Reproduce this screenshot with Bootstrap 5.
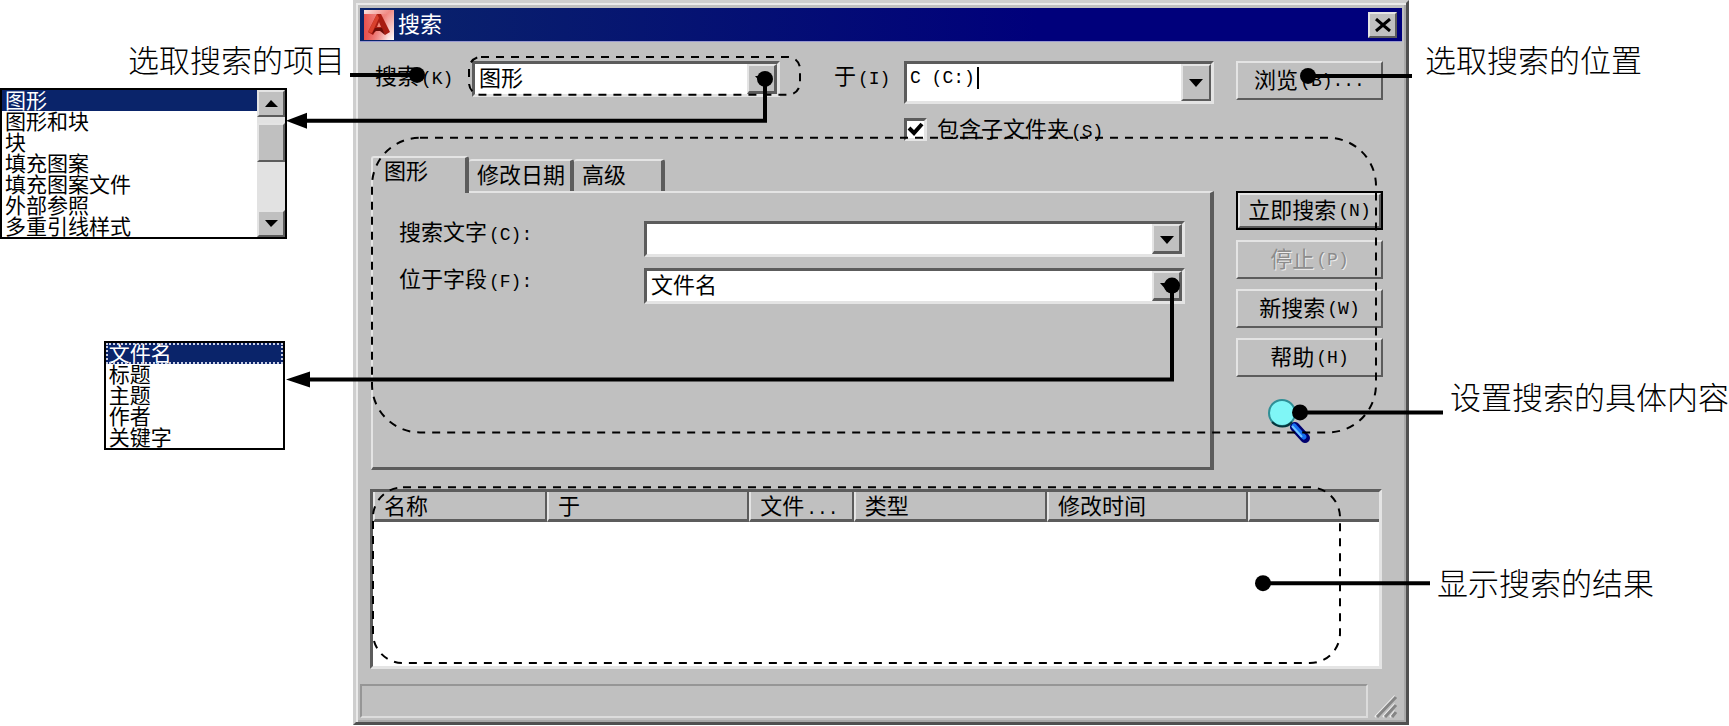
<!DOCTYPE html>
<html lang="zh-CN">
<head>
<meta charset="utf-8">
<meta name="viewport" content="width=device-width, initial-scale=1">
<title>搜索</title>
<link href="https://cdn.jsdelivr.net/npm/bootstrap@5.3.0/dist/css/bootstrap.min.css" rel="stylesheet">
<style>
:root { --face: #c0c0c0; --lite: #e4e4e4; --dark: #5c5c5c; --navy: #0a246a; }
body { font-family: "Liberation Sans", "Noto Sans CJK SC", sans-serif; font-size: 22px; line-height: 24px; color: #000; background: #fff; }
.stage { display: grid; grid-template-columns: 353fr 1056fr 320fr; }
.stage > * { min-width: 0; }
.latin { font-family: "Liberation Mono", monospace; font-size: 18px; line-height: 16px; }
span.latin { margin-left: 2px; }
.callout { font-size: 31px; line-height: 32px; font-weight: 300; white-space: nowrap; margin: 0; }
.overlay { width: 100%; height: 100%; pointer-events: none; }
.overlay * { vector-effect: non-scaling-stroke; }

/* drop-down lists beside the window */
.popup { border: 2px solid #000; font-size: 21px; line-height: 21px; }
.popup .list-group { --bs-list-group-border-width: 0; --bs-list-group-border-radius: 0; --bs-list-group-item-padding-x: 3px; --bs-list-group-item-padding-y: 0; --bs-list-group-color: #000; --bs-list-group-active-bg: var(--navy); }
.popup-a { width: 81.4%; margin-top: 10px; }
.popup-b { width: 51.4%; margin: 102px 0 0 29.4%; }
.popup-b .active { outline: 2px dotted #c9cfe6; outline-offset: -2px; }
.scroller { width: 28px; background: #e2e2e2; }
.scroller button, .scroller .thumb { height: 27px; }
.scroller .thumb { height: 39px; margin-top: 6px; }

/* window */
.dialog { background: var(--face); border: 3px solid; border-color: #cecece #505050 #505050 #cecece; box-shadow: inset 2px 2px #eaeaea, inset -2px -2px #a9a9a9; padding: 5px 4px 4px; }
.titlebar { height: 34px; background: linear-gradient(90deg, #0a246a, #00007b 65%); color: #fff; padding: 0 5px 0 4px; border-bottom: 1px solid #9a9ad0; }
.raised { background: var(--face); border: 2px solid; border-color: var(--lite) var(--dark) var(--dark) var(--lite); border-radius: 0; padding: 0; color: #000; display: flex; align-items: center; justify-content: center; }
.btn-close-x { width: 29px; height: 26px; }
.content { display: grid; grid-template-columns: 843fr 147fr; column-gap: 22px; padding: 19px 19px 0 11px; }
.content > * { min-width: 0; }
.toprow { display: grid; grid-template-columns: 101fr 308fr 54fr 70fr 310fr; }
.toprow > * { min-width: 0; white-space: nowrap; }
.sunken { border: 3px solid; border-color: var(--dark) var(--lite) var(--lite) var(--dark); background-color: #fff; }
.pick.form-select { border: 3px solid; border-color: var(--dark) var(--lite) var(--lite) var(--dark); border-radius: 0; height: 36px; padding: 0 32px 0 4px; font-size: 22px; line-height: 24px; color: #000;
  background: #fff url("data:image/svg+xml,%3Csvg xmlns='http://www.w3.org/2000/svg' width='30' height='30'%3E%3Cpath fill='%23c0c0c0' d='M0 0h30v30H0z'/%3E%3Cpath fill='%23e4e4e4' d='M0 0h30v2H2v28H0z'/%3E%3Cpath fill='%235c5c5c' d='M30 0v30H0l2-3h25V2z'/%3E%3Cpath d='M8 12h14l-7 8z'/%3E%3C/svg%3E") right center / 30px 30px no-repeat; }
.combo { height: 43px; }
.combo input { border: 0; padding: 0 0 0 3px; line-height: 24px; height: 28px; outline: 0; min-width: 0; }
.caret { left: 70px; top: 3px; width: 2px; height: 22px; background: #000; }
.tick { appearance: none; width: 23px; height: 23px; margin: 0; flex: none; border: 3px solid; border-color: var(--dark) var(--lite) var(--lite) var(--dark);
  background: #fff; }
.tick:checked { background: #fff url("data:image/svg+xml,%3Csvg xmlns='http://www.w3.org/2000/svg' viewBox='0 0 17 17'%3E%3Cpath fill='none' stroke='%23000' stroke-width='4' d='M2 7l5 5 8-9'/%3E%3C/svg%3E") center / 17px 17px no-repeat; }
.tabs { display: grid; grid-template-columns: 98fr 105fr 91fr 549fr; margin-top: 15px; align-items: end; }
.tabs button { height: 32px; background: var(--face); border: 0 solid; border-top: 2px solid var(--lite); border-right: 4px solid var(--dark); border-radius: 3px 3px 0 0; padding: 0 0 0 8px; text-align: left; color: #000; white-space: nowrap; }
.tabs button.active { height: 37px; margin-bottom: -2px; position: relative; border-left: 2px solid var(--lite); padding: 0 0 8px 11px; }
.pane { border: 2px solid var(--lite); border-right: 4px solid var(--dark); border-bottom: 3px solid var(--dark); padding: 28px 25px 163px 26px; }
.fields { display: grid; grid-template-columns: 245fr 541fr; row-gap: 11px; }
.side button { height: 39px; white-space: nowrap; width: 100%; }
.side .group { margin-top: 91px; display: grid; gap: 10px; }
.side .main-btn { outline: 2px solid #000; outline-offset: -2px; border-width: 4px; }
.side button:disabled { color: #8c8c8c; text-shadow: 1px 1px #eee; }
.lens { margin: 21px 0 0 31px; }
.results { margin: 19px 20px 0 10px; height: 180px; }
.results .table { table-layout: fixed; margin: 0; border-collapse: separate; border-spacing: 0; }
.results th { background: var(--face); height: 30px; padding: 0 0 0 9px; font-weight: 400; line-height: 24px; border: 0 solid; border-left: 2px solid var(--lite); border-right: 2px solid var(--dark); border-bottom: 3px solid var(--dark); box-shadow: none; white-space: nowrap; color: #000; overflow: hidden; }
.results th:last-child { border-right: 0; }
.statusbar { height: 34px; border: 2px solid; border-color: #969696 #dcdcdc #dcdcdc #969696; }
</style>
</head>
<body>
<main class="stage position-relative overflow-hidden">
  <aside>
    <p class="callout text-end pe-2" style="padding-top:46px">选取搜索的项目</p>
    <div class="popup popup-a d-flex">
      <ul class="list-group flex-grow-1" role="listbox" aria-label="搜索项目">
        <li class="list-group-item active" role="option">图形</li>
        <li class="list-group-item" role="option">图形和块</li>
        <li class="list-group-item" role="option">块</li>
        <li class="list-group-item" role="option">填充图案</li>
        <li class="list-group-item" role="option">填充图案文件</li>
        <li class="list-group-item" role="option">外部参照</li>
        <li class="list-group-item" role="option">多重引线样式</li>
      </ul>
      <div class="scroller d-flex flex-column">
        <button type="button" class="raised" aria-label="向上"><svg width="13" height="7"><path d="M0 7L6 0l7 7z"/></svg></button>
        <div class="raised thumb"></div>
        <button type="button" class="raised mt-auto" aria-label="向下"><svg width="13" height="7"><path d="M0 0h13L6 7z"/></svg></button>
      </div>
    </div>
    <div class="popup popup-b">
      <ul class="list-group" role="listbox" aria-label="字段">
        <li class="list-group-item active" role="option">文件名</li>
        <li class="list-group-item" role="option">标题</li>
        <li class="list-group-item" role="option">主题</li>
        <li class="list-group-item" role="option">作者</li>
        <li class="list-group-item" role="option">关键字</li>
      </ul>
    </div>
  </aside>

  <section class="dialog">
    <header class="titlebar d-flex align-items-center">
      <svg width="30" height="30" viewBox="0 0 30 30" aria-hidden="true">
        <defs>
          <linearGradient id="tile" x1="0" y1="0" x2="1" y2="1"><stop offset="0" stop-color="#fbe3e0"/><stop offset=".45" stop-color="#f08a84"/><stop offset="1" stop-color="#fff"/></linearGradient>
          <linearGradient id="tileL" x1="0" y1="0" x2="1" y2="0"><stop offset="0" stop-color="#e8504c"/><stop offset="1" stop-color="#e8504c" stop-opacity="0"/></linearGradient>
        </defs>
        <path fill="url(#tile)" d="M0 0h30v30H0z"/><path fill="url(#tileL)" d="M0 4h24v26H0z"/>
        <path fill="#a81c12" d="M13 4h4l9 18-5 3-3-5h-6l-3 5-5-3z"/>
        <path fill="#d8402c" d="M13 4l2 4-7 15-4-1z"/>
        <path fill="#6e0d08" d="M11 18h7l3 7-5-4h-4l-4 3z"/>
        <path fill="#f08a7c" d="M13 17l2-5 2 5z"/>
      </svg>
      <span class="ms-1">搜索</span>
      <button type="button" class="raised btn-close-x ms-auto" aria-label="关闭"><svg width="16" height="14"><path fill="none" stroke="#000" stroke-width="3" d="M1 1l14 12M15 1L1 13"/></svg></button>
    </header>

    <div class="content">
      <div>
        <div class="toprow">
          <label for="what" class="ps-1 pt-1">搜索<span class="latin">(K)</span></label>
          <select id="what" class="form-select pick"><option>图形</option></select>
          <span></span>
          <label for="where" class="pt-1">于<span class="latin">(I)</span></label>
          <div class="combo sunken d-flex position-relative">
            <input id="where" class="latin flex-grow-1" type="text" value="C (C:)">
            <span class="caret position-absolute"></span>
            <button type="button" class="raised" style="width:30px" aria-label="展开"><svg width="14" height="8"><path d="M0 0h14L7 8z"/></svg></button>
          </div>
        </div>
        <div class="toprow" style="margin-top:14px">
          <span></span><span></span><span></span><span></span>
          <div class="d-flex align-items-center">
            <input id="sub" class="tick" type="checkbox" checked>
            <label for="sub" style="margin-left:10px;line-height:23px">包含子文件夹<span class="latin">(S)</span></label>
          </div>
        </div>
        <div class="tabs" role="tablist">
          <button type="button" class="active" role="tab">图形</button>
          <button type="button" role="tab">修改日期</button>
          <button type="button" role="tab">高级</button>
        </div>
        <div class="pane">
          <div class="fields">
            <label for="txt">搜索文字<span class="latin">(C):</span></label>
            <select id="txt" class="form-select pick"><option></option></select>
            <label for="fld">位于字段<span class="latin">(F):</span></label>
            <select id="fld" class="form-select pick"><option>文件名</option></select>
          </div>
        </div>
      </div>
      <div class="side">
        <button type="button" class="raised">浏览<span class="latin">(B)...</span></button>
        <div class="group">
          <button type="button" class="raised main-btn">立即搜索<span class="latin">(N)</span></button>
          <button type="button" class="raised" disabled>停止<span class="latin">(P)</span></button>
          <button type="button" class="raised">新搜索<span class="latin">(W)</span></button>
          <button type="button" class="raised">帮助<span class="latin">(H)</span></button>
        </div>
        <svg class="lens d-block" width="44" height="46" viewBox="0 0 44 46" aria-hidden="true">
          <path stroke="#00006e" stroke-width="10" stroke-linecap="round" d="M28 29l10 11"/>
          <path stroke="#1670f0" stroke-width="5" stroke-linecap="round" d="M27 28l10 11"/>
          <path stroke="#6fc4ff" stroke-width="2" d="M25 28l10 11"/>
          <circle cx="15" cy="15" r="13" fill="#7ff6f6" stroke="#2f8f96" stroke-width="2"/>
          <path fill="none" stroke="#04363c" stroke-width="2" d="M5 24c6 6 15 6 20 0"/>
        </svg>
      </div>
    </div>

    <div class="results sunken">
      <table class="table">
        <colgroup><col style="width:17.3%"><col style="width:20.1%"><col style="width:10.4%"><col style="width:19.2%"><col style="width:20%"><col></colgroup>
        <thead><tr><th scope="col">名称</th><th scope="col">于</th><th scope="col">文件<span class="latin">...</span></th><th scope="col">类型</th><th scope="col">修改时间</th><th scope="col"></th></tr></thead>
      </table>
    </div>

    <footer class="d-flex align-items-end" style="margin-top:15px">
      <div class="statusbar flex-grow-1"></div>
      <svg class="me-1 flex-shrink-0" width="30" height="26" aria-hidden="true"><path stroke="#eee" stroke-width="2" d="M7 25L27 4M15 25L27 12M22 25l5-6"/><path stroke="#858585" stroke-width="3" d="M9 25L28 5M17 25L28 13M24 25l4-5"/></svg>
    </footer>
  </section>

  <aside>
    <p class="callout ps-3" style="padding-top:46px">选取搜索的位置</p>
    <p class="callout text-end" style="padding-top:305px">设置搜索的具体内容</p>
    <p class="callout" style="padding:154px 0 0 28px">显示搜索的结果</p>
  </aside>

  <!-- pointers and dashed outlines that tie the notes to the window -->
  <svg class="overlay position-absolute top-0 start-0" viewBox="0 0 1729 726" preserveAspectRatio="none" aria-hidden="true">
    <g fill="none" stroke="#000" stroke-width="2" stroke-dasharray="8 7">
      <rect x="469" y="57" width="331" height="38" rx="12"/>
      <rect x="372" y="138" width="1004" height="295" rx="48"/>
      <rect x="373" y="488" width="967" height="176" rx="30"/>
    </g>
    <g fill="none" stroke="#000" stroke-width="4">
      <path d="M350 75h67"/><path d="M765 79v42H300"/><path d="M1172 286v94H300"/>
      <path d="M1308 76h104"/><path d="M1300 413h143"/><path d="M1263 584h167"/>
    </g>
    <circle cx="417" cy="75" r="8"/><circle cx="765" cy="79" r="8"/><circle cx="1172" cy="286" r="8"/>
    <circle cx="1308" cy="76" r="8"/><circle cx="1300" cy="413" r="8"/><circle cx="1263" cy="584" r="8"/>
    <path d="M286 121l21-8v16zM286 380l24-8v16z"/>
  </svg>
</main>
<script src="https://cdn.jsdelivr.net/npm/bootstrap@5.3.0/dist/js/bootstrap.bundle.min.js"></script>
</body>
</html>
